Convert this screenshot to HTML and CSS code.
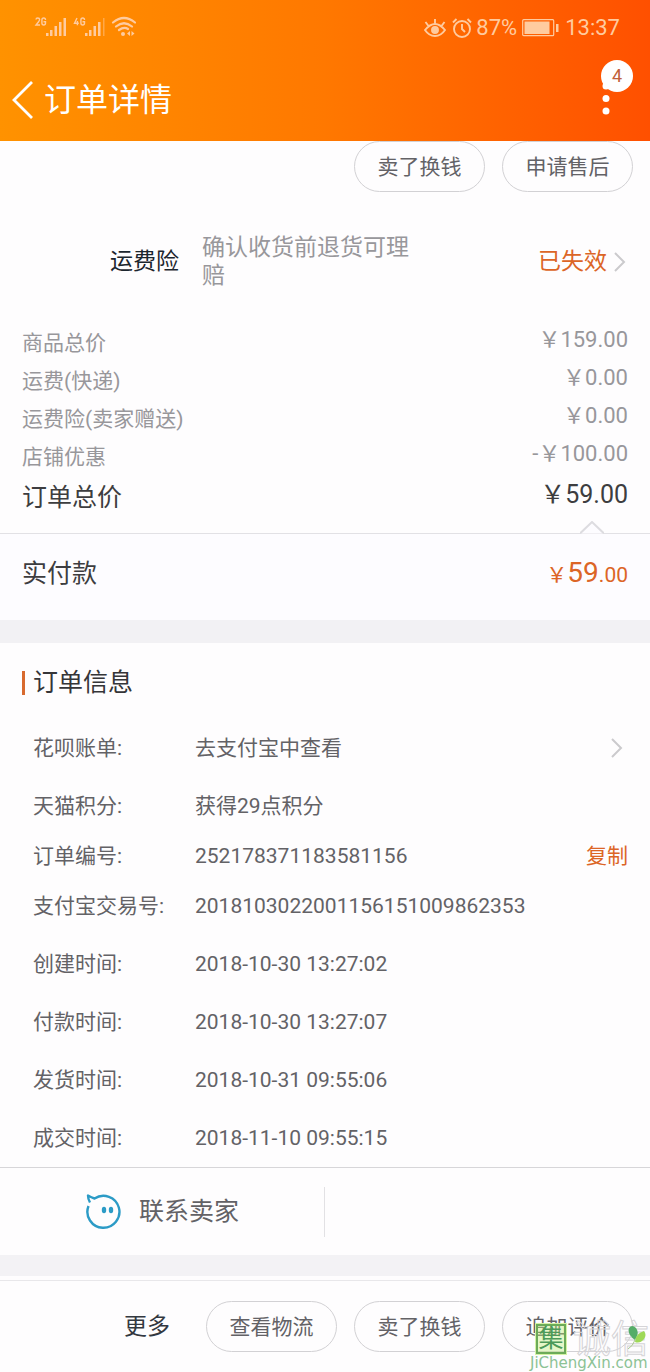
FILE: index.html
```html
<!DOCTYPE html>
<html lang="zh-CN">
<head>
<meta charset="utf-8">
<meta name="viewport" content="width=device-width, initial-scale=1">
<title>订单详情</title>
<link rel="stylesheet" href="styles.css">
</head>
<body>
<header class="header">
  <div class="status">
    <div class="status-group">
      <svg class="signals" viewBox="0 0 102 24" aria-hidden="true">
        <g fill="none" stroke="currentColor" stroke-width="1.4">
          <path d="M2 3.500q0-1.500 1.800-1.500t1.800 1.500q0 1-1.200 2.500l-2.400 3h4M11.500 4q0-2-1.800-2t-1.800 2v3q0 2 1.800 2t1.800-2V5.700h-2"/>
          <path d="M43 2l-2.500 5.200h4.300M43.400 5v4.200M50.500 4q0-2-1.800-2t-1.800 2v3q0 2 1.800 2t1.800-2V5.700h-2"/>
        </g>
        <g fill="currentColor">
          <path d="M12 17h2.500v3H12zM16 14h2.500v6H16zM20.500 10H23v10h-2.500zM25 6h2.500v14H25zM29.500 2H32v18h-2.500z"/>
          <path d="M51 17h2.500v3H51zM55 14h2.500v6H55zM59.500 10H62v10h-2.500zM64 6h2.500v14H64z"/>
          <path d="M69 2h1.500v18H69z" opacity=".45"/>
          <circle cx="89" cy="18" r="2"/>
          <path d="M96 15v5l-3-2.500zM97.500 15v5l3-2.500z"/>
        </g>
        <g fill="none" stroke="currentColor" stroke-width="2.200" stroke-linecap="round">
          <path d="M79 6.500q11-9 22 0M82 10.500q8-6.500 16 0M85 14q5-3.500 9-1"/>
        </g>
      </svg>
    </div>
    <div class="status-group">
      <svg class="eye" viewBox="0 0 22 20" fill="none" stroke="currentColor" stroke-width="1.900" aria-hidden="true">
        <path d="M1 12Q6 6 11 6t10 6q-4 6-10 6T1 12zM11 6V1M4.500 8L1.500 4M17.500 8l3-4"/>
        <circle cx="11" cy="12" r="3" fill="currentColor"/>
      </svg>
      <svg class="alarm" viewBox="0 0 20 20" fill="none" stroke="currentColor" stroke-width="1.900" aria-hidden="true">
        <circle cx="10" cy="11" r="8"/><path d="M10 6v5l3 3M1 4.500L4.500 1M19 4.500L15.500 1"/>
      </svg>
      <span>87%</span>
      <svg class="battery" viewBox="0 0 37 18" aria-hidden="true">
        <rect x=".7" y=".7" width="31" height="16" rx="1" fill="none" stroke="currentColor" stroke-width="1.200"/>
        <path d="M2.500 2.500h25v12.500h-25zM34 5h2.500v8H34z" fill="currentColor"/>
      </svg>
      <span>13:37</span>
    </div>
  </div>
  <div class="titlebar">
    <button class="back" type="button" aria-label="返回">
      <svg viewBox="0 0 22 38" fill="none" stroke="currentColor" stroke-width="2.800"><path d="M20 1L2 19l18 18"/></svg>
    </button>
    <h1 class="title">订单详情</h1>
    <button class="menu" type="button" aria-label="更多选项">
      <svg viewBox="0 0 8 36" fill="currentColor"><circle cx="4" cy="4" r="3.500"/><circle cx="4" cy="16.500" r="3.500"/><circle cx="4" cy="29" r="3.500"/></svg>
      <span class="badge">4</span>
    </button>
  </div>
</header>

<main>
  <div class="actions">
    <button class="pill" type="button">卖了换钱</button>
    <button class="pill" type="button">申请售后</button>
  </div>

  <section class="insurance">
    <span class="insurance-name">运费险</span>
    <span class="insurance-desc">确认收货前退货可理赔</span>
    <a class="insurance-state" href="#">已失效
      <svg class="chevron" viewBox="0 0 12 20"><path d="M1 1l9 9-9 9"/></svg>
    </a>
  </section>

  <dl class="prices">
    <div class="price"><dt>商品总价</dt><dd>￥159.00</dd></div>
    <div class="price"><dt>运费(快递)</dt><dd>￥0.00</dd></div>
    <div class="price"><dt>运费险(卖家赠送)</dt><dd>￥0.00</dd></div>
    <div class="price"><dt>店铺优惠</dt><dd>-￥100.00</dd></div>
    <div class="price total"><dt>订单总价</dt><dd>￥59.00</dd></div>
  </dl>

  <section class="paid">
    <svg class="notch" viewBox="0 0 24 13"><path d="M0 12.500L12 1l12 11.500"/></svg>
    <span>实付款</span>
    <span class="paid-amount">￥<span class="paid-main">59</span>.00</span>
  </section>

  <section class="info">
    <h2 class="info-title">订单信息</h2>
    <dl class="info-list">
      <div class="row"><dt>花呗账单:</dt><dd>去支付宝中查看</dd>
        <a class="row-link" href="#" aria-label="查看花呗账单"><svg class="chevron" viewBox="0 0 12 20"><path d="M1 1l9 9-9 9"/></svg></a></div>
      <div class="row spaced"><dt>天猫积分:</dt><dd>获得29点积分</dd></div>
      <div class="row"><dt>订单编号:</dt><dd>252178371183581156</dd><button class="copy" type="button">复制</button></div>
      <div class="row"><dt>支付宝交易号:</dt><dd>2018103022001156151009862353</dd></div>
      <div class="row spaced"><dt>创建时间:</dt><dd>2018-10-30 13:27:02</dd></div>
      <div class="row spaced"><dt>付款时间:</dt><dd>2018-10-30 13:27:07</dd></div>
      <div class="row spaced"><dt>发货时间:</dt><dd>2018-10-31 09:55:06</dd></div>
      <div class="row spaced"><dt>成交时间:</dt><dd>2018-11-10 09:55:15</dd></div>
    </dl>
  </section>

  <section class="contact">
    <button class="contact-button" type="button">
      <svg class="wangwang" viewBox="0 0 36 36" fill="none" stroke="currentColor" stroke-width="2.400">
        <path d="M3.500 12A16 16 0 1 0 9.500 4.500Q6.500 3.500 3 1.500Q3 5 5 8.500" stroke-linejoin="round"/>
        <g fill="currentColor" stroke="none"><ellipse cx="19" cy="16" rx="2.200" ry="3.200"/><ellipse cx="26" cy="16" rx="2.200" ry="3.200"/></g>
      </svg>
      联系卖家
    </button>
  </section>
</main>

<footer class="footer">
  <button class="more" type="button">更多</button>
  <button class="pill" type="button">查看物流</button>
  <button class="pill" type="button">卖了换钱</button>
  <button class="pill" type="button">追加评价</button>
  <div class="watermark">
    <div class="mark-top"><span class="seal">集</span><span class="hollow">诚信</span>
      <svg class="leaf" viewBox="0 0 20 24"><path d="M8 15Q0 9 2 3Q5-1 9 3Q13 8 8 15z" fill="#55ad68"/><path d="M8 17Q8 9 17 6Q20 10 17 14Q13 19 8 17z" fill="#9ed957"/><path d="M8 15Q6 21 1 24" fill="none" stroke="#a9c78b"/></svg>
    </div>
    <div class="site">JiChengXin.com</div>
  </div>
</footer>
</body>
</html>
```
FILE: styles.css
```css
* { box-sizing: border-box; }

body {
  margin: 0;
  background: #fefdfe;
  color: #636266;
  font-family: Roboto, "Noto Sans CJK SC", sans-serif;
  font-size: 21px;
  font-weight: 400;
  line-height: 28px;
}

button {
  margin: 0;
  padding: 0;
  border: 0;
  background: none;
  color: inherit;
  font: inherit;
}

a { color: inherit; text-decoration: none; }
h1, h2, dl, dt, dd { margin: 0; font-weight: 400; }
svg { display: block; }

.header {
  padding: 14px 18px 11px 12px;
  background: linear-gradient(90deg, #ff9200, #ff7800 50%, #ff5000);
  color: #fff;
}

.status {
  display: flex;
  justify-content: space-between;
  padding: 0 12px 0 22px;
  color: #ffcb9f;
  font-size: 22px;
}

.status-group { display: flex; align-items: center; gap: 4px; }
.signals { width: 102px; height: 24px; }
.eye { width: 22px; height: 20px; margin-right: 2px; }
.alarm { width: 20px; height: 20px; }
.battery { width: 37px; height: 18px; margin: 0 2px 0 1px; }

.titlebar {
  display: flex;
  align-items: center;
  padding-top: 28px;
}

.back svg { width: 22px; height: 38px; }

.title {
  flex: 1;
  margin-left: 10px;
  font-size: 32px;
  line-height: 60px;
}

.menu { position: relative; margin-right: 22px; }
.menu svg { width: 8px; height: 36px; }

.badge {
  position: absolute;
  left: -1px;
  bottom: 26px;
  width: 32px;
  height: 32px;
  border-radius: 50%;
  background: #fff;
  color: #c0603a;
  font-size: 18px;
  line-height: 32px;
  text-align: center;
}

.actions {
  display: flex;
  justify-content: flex-end;
  gap: 17px;
  padding: 0 17px;
}

.pill {
  width: 131px;
  height: 51px;
  border: 1px solid #d2d1d4;
  border-radius: 26px;
}

.insurance {
  display: flex;
  align-items: center;
  padding: 42px 24px 34px 110px;
  color: #98979b;
  font-size: 23px;
}

.insurance-name { color: #1c262e; }
.insurance-desc { width: 212px; margin-left: 23px; }

.insurance-state {
  display: flex;
  align-items: center;
  gap: 7px;
  margin-left: auto;
  color: #dc6526;
}

.chevron {
  width: 12px;
  height: 20px;
  fill: none;
  stroke: #cbcacd;
  stroke-width: 2;
}

.prices { padding: 0 22px 14px; color: #98979b; }

.price {
  display: flex;
  align-items: flex-start;
  justify-content: space-between;
  line-height: 38px;
}

.price dd { font-size: 22px; line-height: 32px; }

.total { color: #3d3d40; font-size: 25px; line-height: 43px; }
.total dd { font-size: 25px; line-height: 38px; }

.paid {
  position: relative;
  display: flex;
  align-items: center;
  justify-content: space-between;
  height: 87px;
  padding: 0 22px 6px;
  border-top: 1px solid #e2e1e5;
  background: #fdfcff;
  color: #3d3d40;
  font-size: 25px;
}

.notch {
  position: absolute;
  right: 46px;
  top: -13px;
  width: 24px;
  height: 13px;
  fill: #fdfcff;
  stroke: #dddce0;
  stroke-width: 2;
}

.paid-amount { color: #dc6526; font-size: 21px; }
.paid-main { font-size: 28px; }

.info {
  padding: 26px 22px 4px;
  border-top: 23px solid #f2f1f4;
}

.info-title {
  display: flex;
  align-items: center;
  gap: 8px;
  color: #353538;
  font-size: 25px;
}

.info-title::before {
  content: "";
  width: 3px;
  height: 24px;
  background: #d86a2f;
}

.info-list { padding: 26px 0 0 11px; }

.row {
  display: grid;
  grid-template-columns: 162px 1fr auto;
  align-items: center;
  min-height: 50px;
}

.spaced { margin-top: 8px; }
.row-link { padding-right: 5px; }
.copy { color: #dc6526; }

.contact {
  display: grid;
  grid-template-columns: 1fr 1fr;
  padding: 19px 0 18px;
  border-top: 1px solid #d7d6d9;
}

.contact-button {
  display: flex;
  align-items: center;
  justify-content: center;
  gap: 18px;
  height: 50px;
  border-right: 1px solid #e2e1e4;
  font-size: 25px;
}

.wangwang { width: 36px; height: 36px; color: #2c9bc6; }

.footer {
  position: relative;
  display: flex;
  align-items: center;
  justify-content: flex-end;
  gap: 17px;
  padding: 25px 17px 20px;
  border-top: 21px solid #f3f2f5;
}

.footer::before {
  content: "";
  position: absolute;
  top: 4px;
  left: 0;
  right: 0;
  border-top: 1px solid #e8e7ea;
}

.more { margin-right: 19px; color: #333840; font-size: 23px; }

.watermark {
  position: absolute;
  right: 0;
  bottom: 0;
  width: 120px;
  pointer-events: none;
}

.mark-top {
  position: relative;
  display: flex;
  align-items: center;
  gap: 7px;
  padding-left: 6px;
}

.seal {
  width: 30px;
  height: 30px;
  border: 2px solid #6cab58;
  outline: 1px solid #d4f2a5;
  background: rgba(190, 238, 120, .4);
  color: #4c9a58;
  font-size: 25px;
  line-height: 26px;
  text-align: center;
}

.hollow {
  color: transparent;
  font-size: 38px;
  line-height: 32px;
  white-space: nowrap;
  -webkit-text-stroke: 1px #d5d4d7;
}

.leaf { position: absolute; right: 3px; top: 2px; width: 20px; height: 24px; }

.site {
  color: #8cc295;
  font-family: "DejaVu Sans", sans-serif;
  font-size: 15px;
  line-height: 17px;
  white-space: nowrap;
}
```
